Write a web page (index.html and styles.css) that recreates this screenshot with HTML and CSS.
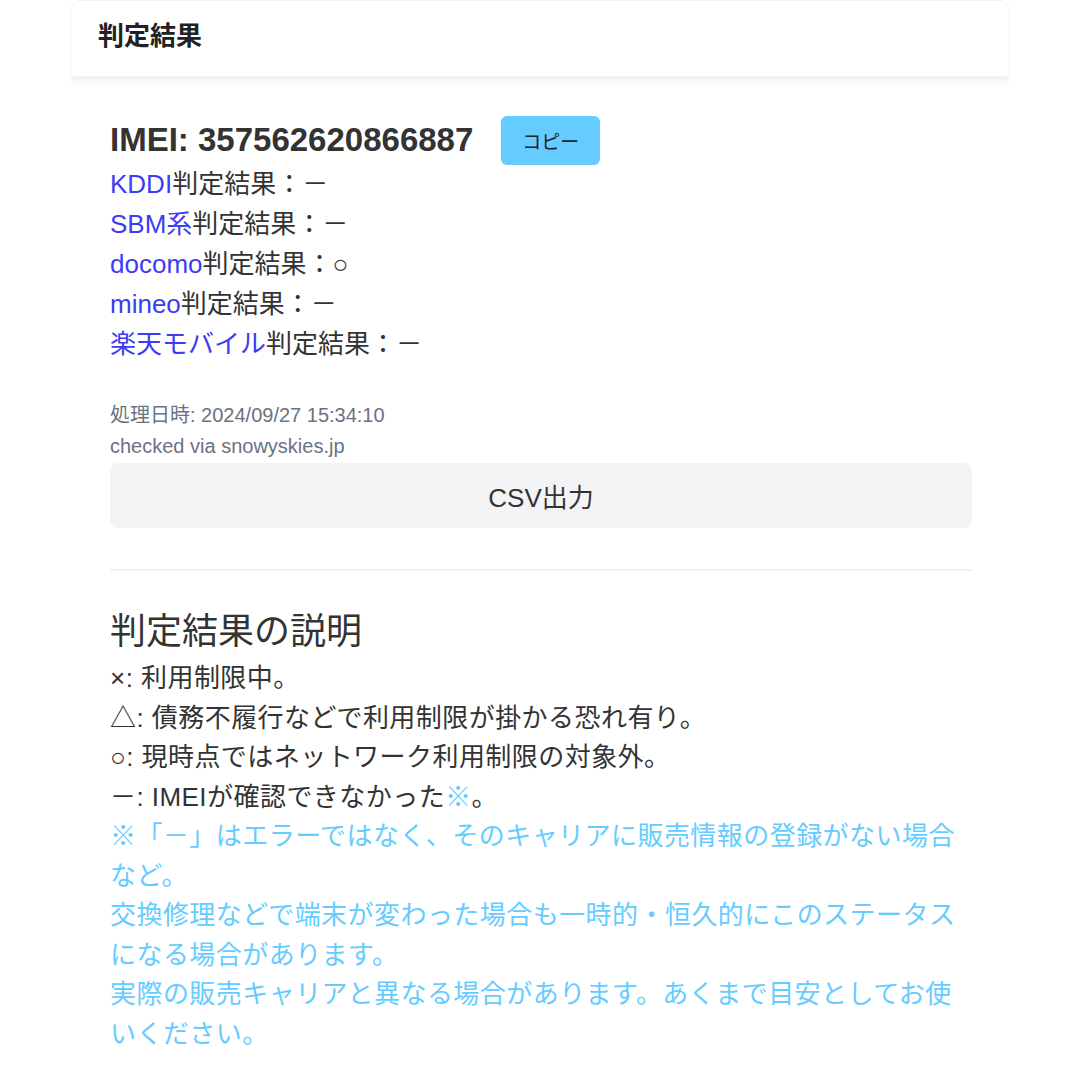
FILE: index.html
```html
<!DOCTYPE html>
<html lang="ja">
<head>
<meta charset="utf-8">
<title>判定結果</title>
<link rel="stylesheet" href="styles.css">
</head>
<body>
<div class="card">
  <div class="card-header">判定結果</div>
  <div class="card-body">
    <div class="imei-row">
      <span class="imei">IMEI: 357562620866887</span>
      <button class="copy-btn">コピー</button>
    </div>
    <div class="results">
      <div class="line"><span class="carrier">KDDI</span>判定結果：－</div>
      <div class="line"><span class="carrier">SBM系</span>判定結果：－</div>
      <div class="line"><span class="carrier">docomo</span>判定結果：○</div>
      <div class="line"><span class="carrier">mineo</span>判定結果：－</div>
      <div class="line"><span class="carrier">楽天モバイル</span>判定結果：－</div>
    </div>
    <div class="meta">
      <div>処理日時: 2024/09/27 15:34:10</div>
      <div>checked via snowyskies.jp</div>
    </div>
    <button class="csv-btn">CSV出力</button>
    <hr class="sep">
    <h2 class="explain-title">判定結果の説明</h2>
    <div class="explain">
      <div>×: 利用制限中。</div>
      <div>△: 債務不履行などで利用制限が掛かる恐れ有り。</div>
      <div>○: 現時点ではネットワーク利用制限の対象外。</div>
      <div>－: IMEIが確認できなかった<span class="note-mark">※</span>。</div>
      <div class="note">※「－」はエラーではなく、そのキャリアに販売情報の登録がない場合など。</div>
      <div class="note">交換修理などで端末が変わった場合も一時的・恒久的にこのステータスになる場合があります。</div>
      <div class="note">実際の販売キャリアと異なる場合があります。あくまで目安としてお使いください。</div>
    </div>
  </div>
</div>
</body>
</html>
```

FILE: styles.css
```css
html, body {
  margin: 0;
  padding: 0;
  background: #ffffff;
}
body {
  font-family: "Liberation Sans", "Noto Sans CJK JP", sans-serif;
  color: #333333;
}
.card {
  width: 940px;
  margin-left: 70px;
  border-radius: 12px 12px 0 0;
  background: #ffffff;
  overflow: hidden;
  padding-bottom: 10px;
}
.card-header {
  height: 76px;
  box-sizing: border-box;
  padding: 18px 27px 0;
  font-size: 26px;
  font-weight: bold;
  line-height: 34px;
  color: #222222;
  border: 1px solid #f2f2f2;
  border-bottom: none;
  border-radius: 12px 12px 0 0;
  box-shadow: 0 4px 7px rgba(0, 0, 0, 0.08);
  position: relative;
}
.card-body {
  padding: 40px 38px 0 40px;
}
.imei-row {
  display: flex;
  align-items: center;
  gap: 28px;
  height: 48px;
}
.imei {
  font-size: 33px;
  font-weight: bold;
  color: #333333;
  line-height: 48px;
}
.copy-btn {
  width: 99px;
  height: 49px;
  border: none;
  border-radius: 6px;
  background: #66ccff;
  color: #222222;
  font-family: "Liberation Sans", "Noto Sans CJK JP", sans-serif;
  font-size: 19px;
  padding: 0;
}
.results {
  font-size: 26px;
  line-height: 40px;
}
.carrier {
  color: #3c3cf5;
}
.meta {
  margin-top: 36px;
  font-size: 20px;
  line-height: 31px;
  color: #6b7280;
}
.csv-btn {
  display: block;
  width: 100%;
  height: 65px;
  margin-top: 1px;
  border: none;
  border-radius: 8px;
  background: #f3f4f6;
  color: #333333;
  font-family: "Liberation Sans", "Noto Sans CJK JP", sans-serif;
  font-size: 26px;
  padding: 0;
}
.sep {
  margin: 41px 0 0;
  border: none;
  height: 2px;
  background: #f0f1f3;
}
.explain-title {
  margin: 36px 0 0;
  font-size: 36px;
  font-weight: normal;
  line-height: 50px;
  color: #333333;
}
.explain {
  margin-top: 2px;
  max-width: 858px;
  font-size: 26px;
  line-height: 39.5px;
  letter-spacing: 0.45px;
}
.note, .note-mark {
  color: #66ccff;
}
```
